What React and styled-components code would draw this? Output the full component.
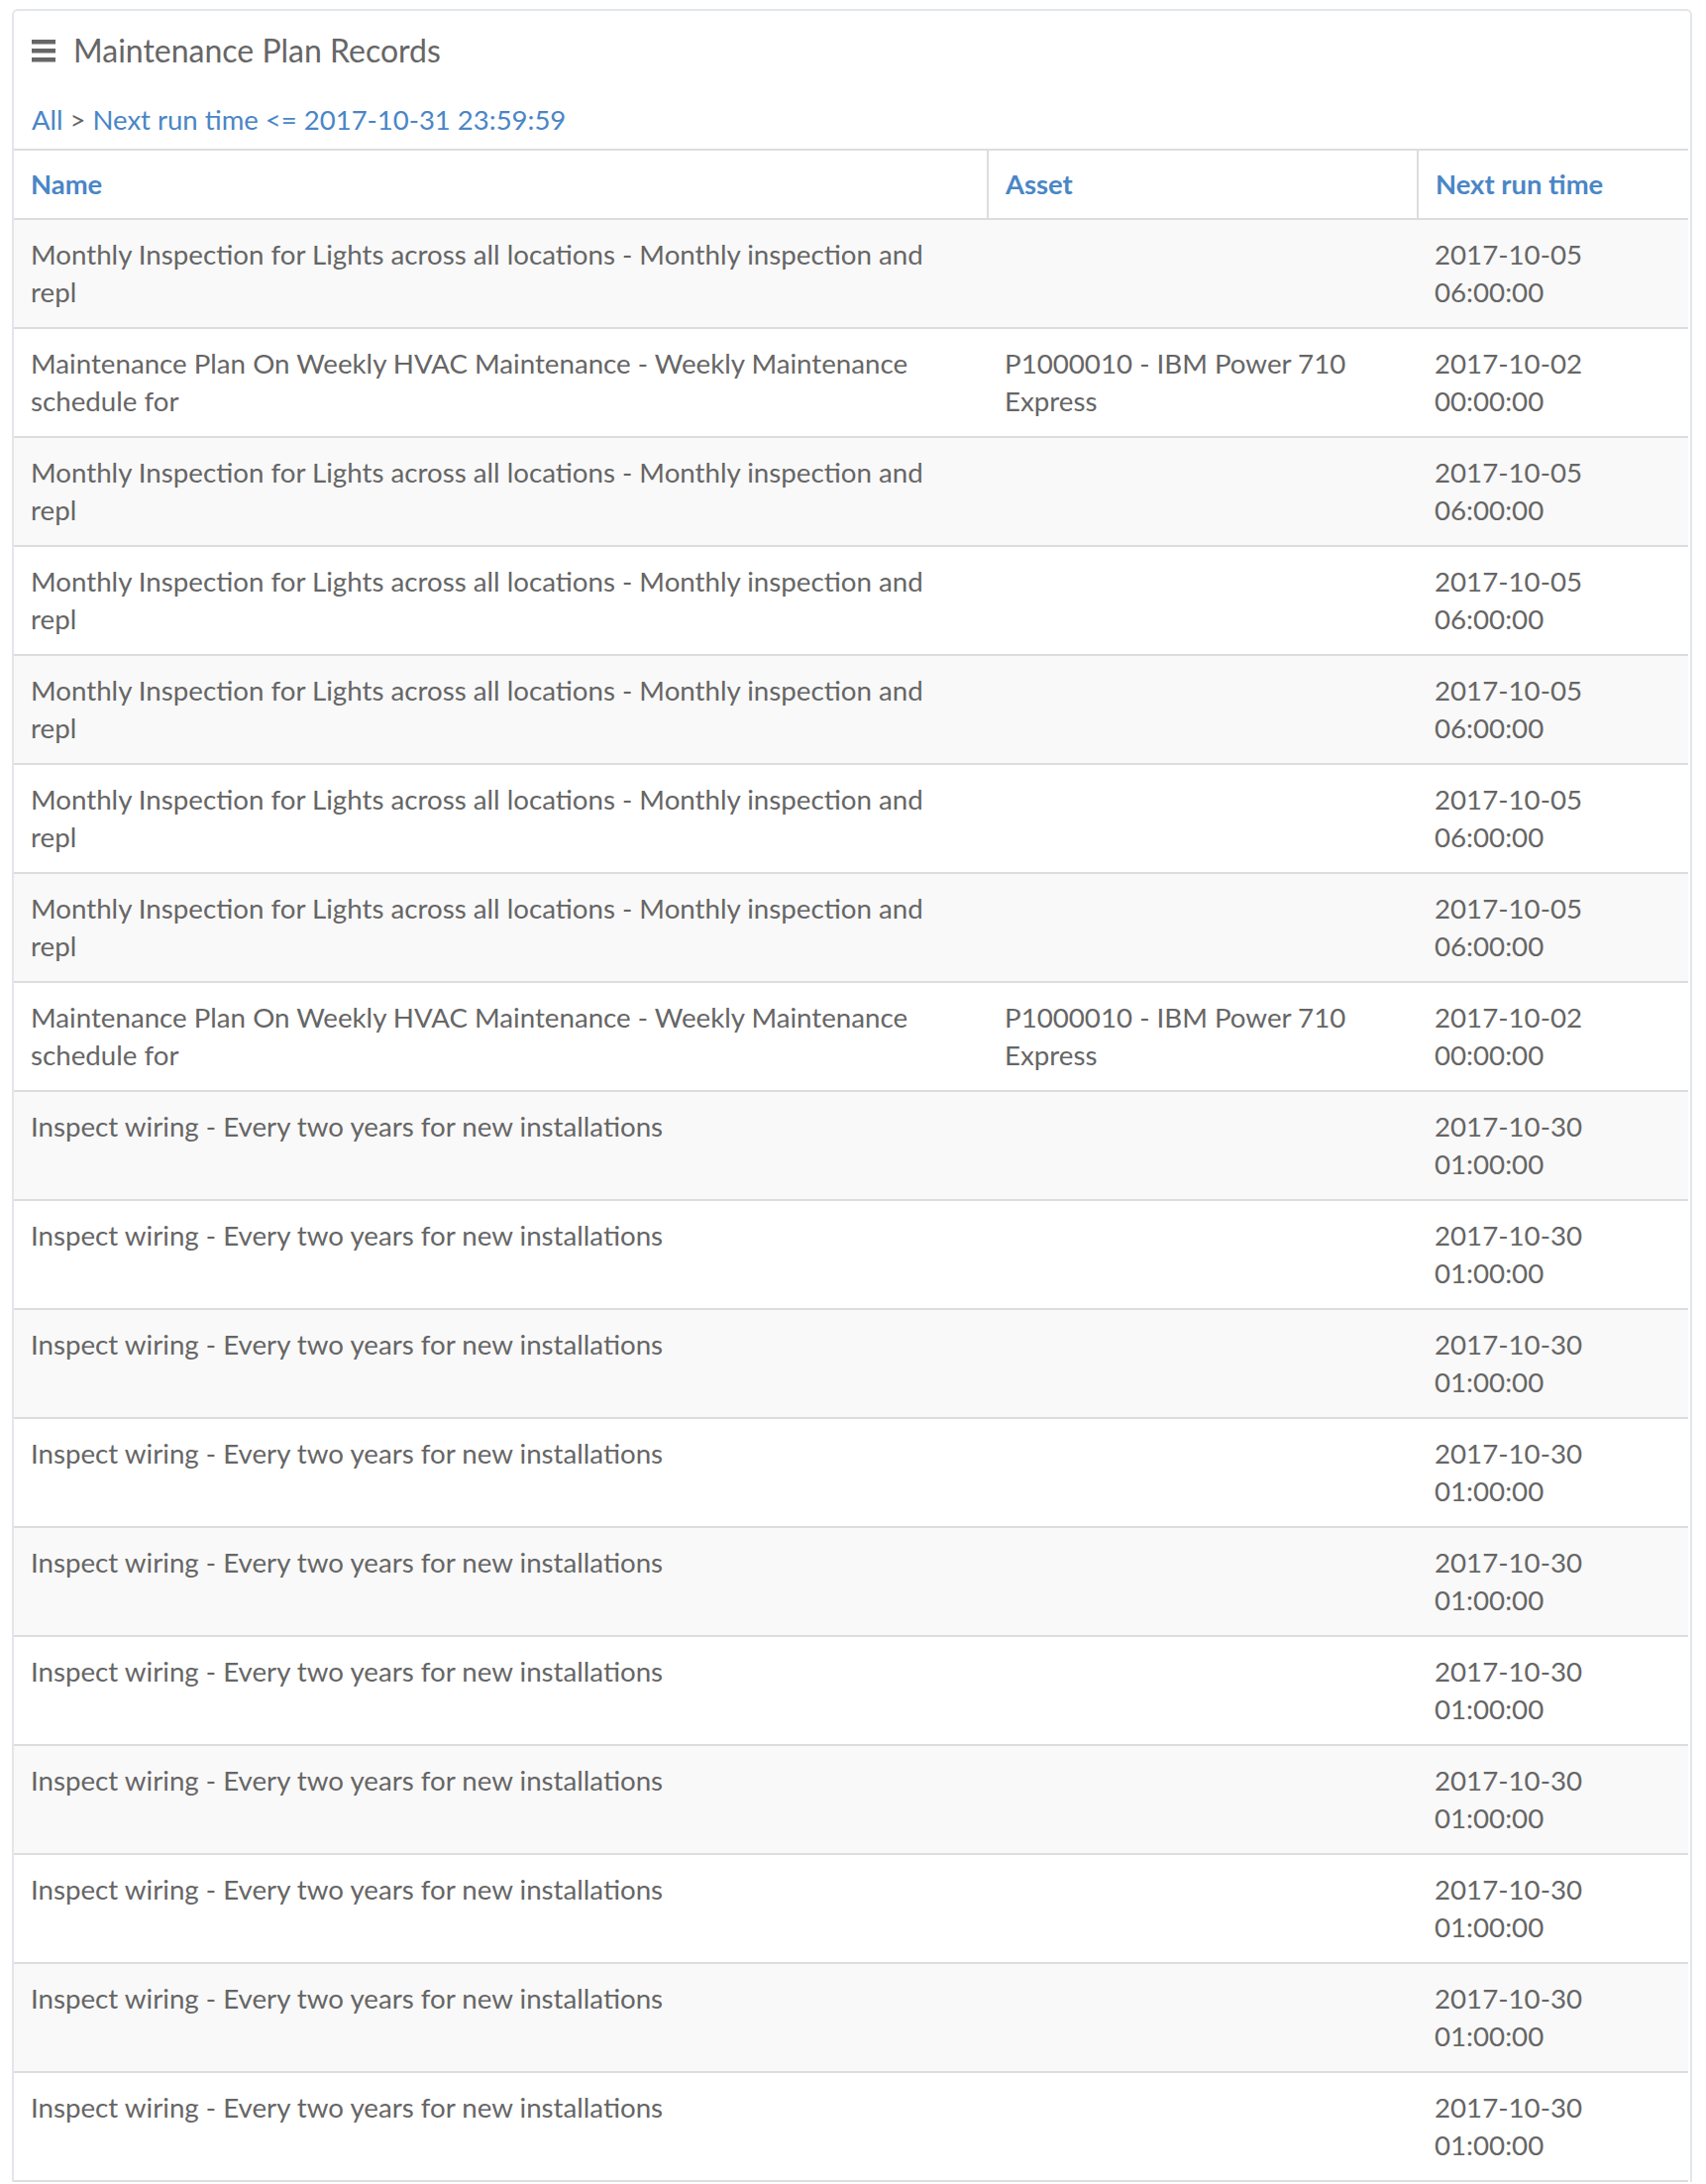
import React from "react";
import styled, { createGlobalStyle } from "styled-components";

const GlobalStyle = createGlobalStyle`
  html, body {
    margin: 0;
    padding: 0;
    background: #ffffff;
    font-family: Lato, "Open Sans", "Liberation Sans", sans-serif;
  }
  * { box-sizing: border-box; }
`;

const Page = styled.div`
  padding: 9px 14px 0 12px;
`;

const Card = styled.section`
  border: 2px solid #e2e6ea;
  border-bottom: none;
  border-radius: 6px 6px 0 0;
  background: #fff;
`;

const CardHeader = styled.header`
  padding: 21px 17px 12px 18px;
  display: flex;
  flex-direction: column;
  gap: 34px;
`;

const TitleRow = styled.div`
  display: flex;
  align-items: center;
  gap: 18px;
  color: #666666;
  font-size: 32px;
  line-height: 38px;
`;

const MenuIcon = styled.svg`
  width: 24px;
  height: 23px;
  flex: none;
  fill: #666666;
`;

const Breadcrumb = styled.nav`
  font-size: 27.5px;
  line-height: 34px;
  color: #666666;
  display: flex;
  gap: 7px;
`;

const Crumb = styled.a`
  color: #4a86c6;
  text-decoration: none;
`;

const Table = styled.table`
  width: calc(100% - 2px);
  border-collapse: collapse;
  table-layout: fixed;
  font-size: 27.7px;
  line-height: 38px;
  color: #666666;
`;

const HeadCell = styled.th`
  text-align: left;
  font-weight: 700;
  font-size: 27.4px;
  color: #4a86c6;
  padding: 15px 17px 15px 17px;
  border-top: 2px solid #dddddd;
  border-bottom: 2px solid #dddddd;
  border-left: ${(p) => (p.$first ? "none" : "2px solid #dddddd")};
  width: ${(p) => p.$width};
`;

const Row = styled.tr`
  background: ${(p) => (p.$striped ? "#f9f9f9" : "#ffffff")};
  border-bottom: 2px solid #dddddd;
`;

const Cell = styled.td`
  vertical-align: top;
  padding: 16px 17px 16px 17px;
  height: 110px;
`;

const monthly = {
  name: "Monthly Inspection for Lights across all locations - Monthly inspection and repl",
  asset: "",
  next: "2017-10-05 06:00:00",
};
const hvac = {
  name: "Maintenance Plan On Weekly HVAC Maintenance - Weekly Maintenance schedule for",
  asset: "P1000010 - IBM Power 710 Express",
  next: "2017-10-02 00:00:00",
};
const wiring = {
  name: "Inspect wiring - Every two years for new installations",
  asset: "",
  next: "2017-10-30 01:00:00",
};

const rows = [
  monthly, hvac, monthly, monthly, monthly, monthly, monthly, hvac,
  wiring, wiring, wiring, wiring, wiring, wiring, wiring, wiring, wiring, wiring,
];

export default function App() {
  return (
    <>
      <GlobalStyle />
      <Page>
        <Card>
          <CardHeader>
            <TitleRow>
              <MenuIcon viewBox="0 0 24 23" aria-hidden="true">
                <rect x="0" y="0" width="24" height="4.5" />
                <rect x="0" y="9" width="24" height="4.5" />
                <rect x="0" y="18" width="24" height="4.5" />
              </MenuIcon>
              <span>Maintenance Plan Records</span>
            </TitleRow>
            <Breadcrumb>
              <Crumb>All</Crumb>
              <span>&gt;</span>
              <Crumb>Next run time &lt;= 2017-10-31 23:59:59</Crumb>
            </Breadcrumb>
          </CardHeader>
          <Table>
            <thead>
              <tr>
                <HeadCell $first $width="983px">Name</HeadCell>
                <HeadCell $width="434px">Asset</HeadCell>
                <HeadCell>Next run time</HeadCell>
              </tr>
            </thead>
            <tbody>
              {rows.map((r, i) => (
                <Row key={i} $striped={i % 2 === 0}>
                  <Cell>{r.name}</Cell>
                  <Cell>{r.asset}</Cell>
                  <Cell>{r.next}</Cell>
                </Row>
              ))}
            </tbody>
          </Table>
        </Card>
      </Page>
    </>
  );
}
